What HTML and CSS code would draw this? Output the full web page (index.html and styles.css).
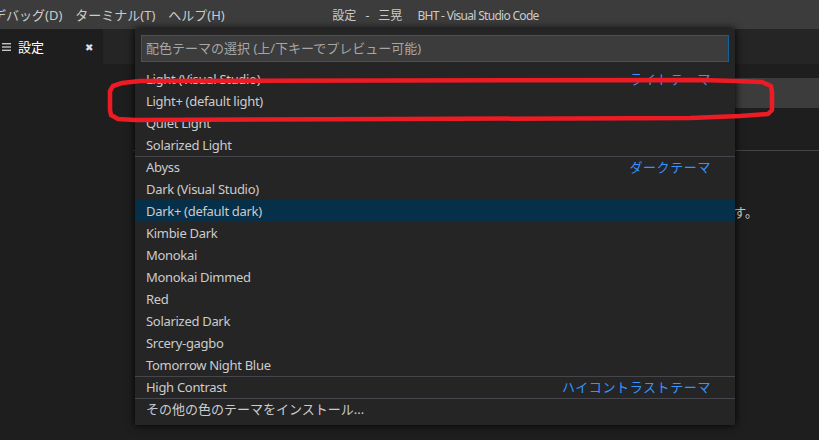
FILE: index.html
```html
<!DOCTYPE html>
<html lang="ja">
<head>
    <meta charset="UTF-8">
    <title>設定 - 三晃 BHT - Visual Studio Code</title>
    <link rel="stylesheet" href="styles.css">
</head>
<body>
<div class="titlebar">
    <div class="menu">
        <div class="menu-item first">デバッグ(D)</div>
        <div class="menu-item">ターミナル(T)</div>
        <div class="menu-item">ヘルプ(H)</div>
    </div>
    <div class="window-title"><span class="title-file">設定 - 三晃</span><span class="title-app">BHT - Visual Studio Code</span></div>
</div>

<div class="tabbar">
    <div class="tab active">
        <svg class="tab-icon" width="10" height="10" viewBox="0 0 10 10">
            <rect x="0" y="1" width="9" height="1.4" fill="#c5c5c5"/>
            <rect x="0" y="4.3" width="9" height="1.4" fill="#c5c5c5"/>
            <rect x="0" y="7.6" width="9" height="1.4" fill="#c5c5c5"/>
        </svg>
        <span class="tab-label">設定</span>
        <span class="tab-close">&#x2716;</span>
    </div>
</div>

<div class="settings">
    <div class="settings-search"></div>
    <div class="settings-sep"></div>
    <div class="settings-desc">この設定は、ワークベンチで使用される配色テーマを指定します。</div>
</div>

<!-- クイックピック (配色テーマの選択) -->
<div class="quick-pick">
    <div class="qp-input">配色テーマの選択 (上/下キーでプレビュー可能)</div>
    <div class="qp-list">
        <div class="qp-row"><span>Light (Visual Studio)</span><span class="qp-label">ライトテーマ</span></div>
        <div class="qp-row"><span>Light+ (default light)</span></div>
        <div class="qp-row"><span>Quiet Light</span></div>
        <div class="qp-row"><span>Solarized Light</span></div>
        <div class="qp-row sep"><span>Abyss</span><span class="qp-label">ダークテーマ</span></div>
        <div class="qp-row"><span>Dark (Visual Studio)</span></div>
        <div class="qp-row selected"><span>Dark+ (default dark)</span></div>
        <div class="qp-row"><span>Kimbie Dark</span></div>
        <div class="qp-row"><span>Monokai</span></div>
        <div class="qp-row"><span>Monokai Dimmed</span></div>
        <div class="qp-row"><span>Red</span></div>
        <div class="qp-row"><span>Solarized Dark</span></div>
        <div class="qp-row"><span>Srcery-gagbo</span></div>
        <div class="qp-row"><span>Tomorrow Night Blue</span></div>
        <div class="qp-row sep"><span>High Contrast</span><span class="qp-label">ハイコントラストテーマ</span></div>
        <div class="qp-row sep jp"><span>その他の色のテーマをインストール...</span></div>
    </div>
</div>

<!-- 赤い囲み -->
<svg class="mark" width="819" height="440" viewBox="0 0 819 440">
    <path d="M140 81 L700 80 L736 81 L762 82 L771 86 L772 92 L772 110 L768 114 L740 116 L690 118 L400 119 L135 120 L118 119 L111 115 L110 110 L110 91 L113 86 L122 83 Z"
          fill="none" stroke="#ed1c24" stroke-width="4.5" stroke-linejoin="round"/>
</svg>
</body>
</html>
```

FILE: styles.css
```css
* {
    box-sizing: border-box;
}

body {
    margin: 0;
    width: 819px;
    height: 440px;
    overflow: hidden;
    background: #1e1e1e;
    color: #cccccc;
    font-family: "Noto Sans", "Noto Sans CJK JP", sans-serif;
    font-size: 13px;
    position: relative;
}

.titlebar {
    height: 29px;
    background: #3c3c3c;
    display: flex;
    align-items: center;
    white-space: nowrap;
}

.menu {
    display: flex;
}

.menu-item {
    padding: 0 6.5px;
}

.menu-item.first {
    margin-left: -13.5px;
}

.window-title {
    margin-left: 101px;
    font-size: 12px;
}

.title-file {
    word-spacing: 6px;
    margin-right: 15px;
}

.title-app {
    letter-spacing: -0.7px;
}

.tabbar {
    height: 35px;
    background: #252526;
    display: flex;
}

.tab {
    width: 103px;
    display: flex;
    align-items: center;
    padding-left: 2px;
}

.tab.active {
    background: #1e1e1e;
    color: #ffffff;
}

.tab-icon {
    margin-right: 6px;
}

.tab-label {
    flex: 1;
    font-size: 13px;
}

.tab-close {
    font-size: 10px;
    margin-right: 10px;
    color: #e0e0e0;
}

.settings {
    padding-left: 133px;
}

.settings-search {
    margin-top: 14px;
    margin-left: 20px;
    height: 30px;
    background: #3c3c3c;
}

.settings-sep {
    margin-top: 42px;
    height: 1px;
    background: #454545;
}

.settings-desc {
    width: 625px;
    margin-top: 51px;
    text-align: right;
    white-space: nowrap;
    overflow: hidden;
}

.quick-pick {
    position: absolute;
    left: 135px;
    top: 29px;
    width: 600px;
    height: 396px;
    background: #252526;
    box-shadow: 0 0 8px #000000;
    padding: 6px 6px 5px;
}

.qp-input {
    height: 27px;
    line-height: 25px;
    border: 1px solid #0e639c;
    background: #3c3c3c;
    color: #a6a6a6;
    padding-left: 4px;
}

.qp-list {
    margin: 6px -6px 0;
}

.qp-row {
    height: 22px;
    line-height: 22px;
    padding: 0 24px 0 11px;
    display: flex;
    justify-content: space-between;
    white-space: nowrap;
    letter-spacing: -0.3px;
}

.qp-row.jp {
    letter-spacing: 0;
}

.qp-row.sep {
    border-top: 1px solid #45454b;
    line-height: 21px;
}

.qp-row.selected {
    background: #062f4a;
}

.qp-label {
    color: #3794ff;
    letter-spacing: 0.6px;
}

.mark {
    position: absolute;
    left: 0;
    top: 0;
    pointer-events: none;
}
```
